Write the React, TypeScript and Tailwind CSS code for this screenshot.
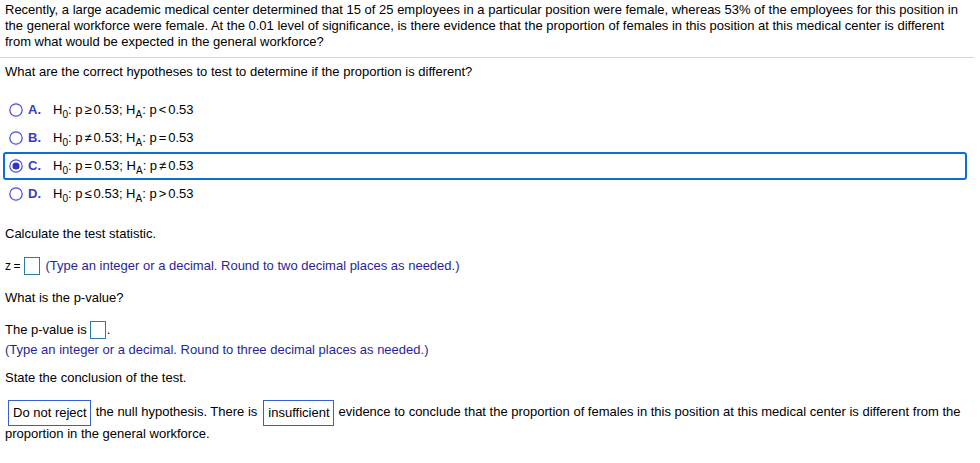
import React from "react";

const font = { fontFamily: '"Liberation Sans", Arial, sans-serif' };

function Radio({ checked }: { checked?: boolean }) {
  return (
    <svg width="14" height="14" viewBox="0 0 14 14" className="shrink-0">
      <circle cx="7" cy="7" r="6.2" fill="white" stroke="#4b4bd6" strokeWidth="1.2" />
      {checked && <circle cx="7" cy="7" r="3.6" fill="#3434c4" />}
    </svg>
  );
}

function Sub({ children }: { children: React.ReactNode }) {
  return <span className="relative top-[4px] text-[10px] leading-none">{children}</span>;
}

function Rel({ op }: { op: string }) {
  return (
    <span>
      p<span className="mx-[2px]">{op}</span>0.53
    </span>
  );
}

const options = [
  { l: "A.", h0: "\u2265", ha: "<" },
  { l: "B.", h0: "\u2260", ha: "=" },
  { l: "C.", h0: "=", ha: "\u2260", sel: true },
  { l: "D.", h0: "\u2264", ha: ">" },
];

export default function App() {
  return (
    <div className="w-[974px] bg-white text-[13px] leading-[16px] text-black" style={font}>
      <div className="px-[5px] pt-[2px] pb-[7px] border-b border-[#d3d6dc]">
        Recently, a large academic medical center determined that 15 of 25 employees in a particular position were female, whereas 53% of the employees for this position in the general workforce were female. At the 0.01 level of significance, is there evidence that the proportion of females in this position at this medical center is different from what would be expected in the general workforce?
      </div>
      <div className="px-[5px]">
        <div className="mt-[6px]">What are the correct hypotheses to test to determine if the proportion is different?</div>
        <div className="mt-[16px] ml-[-2px] mr-[2px] flex flex-col">
          {options.map((o) => (
            <div
              key={o.l}
              className={
                "h-[28px] flex items-center rounded-[3px] border-2 pl-[4px] " +
                (o.sel ? "border-[#0b70cf]" : "border-transparent")
              }
            >
              <Radio checked={o.sel} />
              <span className="ml-[5px] w-[25px] font-bold text-[#3b3bbf]">{o.l}</span>
              <span>
                H<Sub>0</Sub>: <Rel op={o.h0} />; H<Sub>A</Sub>: <Rel op={o.ha} />
              </span>
            </div>
          ))}
        </div>
        <div className="mt-[18px]">Calculate the test statistic.</div>
        <div className="mt-[15px] flex items-center h-[18px]">
          <span className="text-[12px]">z&thinsp;=</span>
          <span className="ml-[4px] w-[16px] h-[18px] border border-[#2a7ca4] bg-white"></span>
          <span className="ml-[5px] text-[#2a1f96]">(Type an integer or a decimal. Round to two decimal places as needed.)</span>
        </div>
        <div className="mt-[15px]">What is the p-value?</div>
        <div className="mt-[15px] flex items-center h-[18px]">
          <span>The p-value is</span>
          <span className="ml-[3px] w-[16px] h-[18px] border border-[#2a7ca4] bg-white"></span>
          <span className="ml-[1px]">.</span>
        </div>
        <div className="mt-[3px] text-[#2a1f96]">(Type an integer or a decimal. Round to three decimal places as needed.)</div>
        <div className="mt-[12px]">State the conclusion of the test.</div>
        <div className="mt-[14px] leading-[16px]">
          <span className="inline-block ml-[3px] mr-[5px] border border-[#3560d4] pl-[4px] pr-[3px] py-[4px] align-middle">Do not reject</span>
          <span>the null hypothesis. There is</span>
          <span className="inline-block ml-[6px] mr-[5px] border border-[#3560d4] pl-[4px] pr-[3px] py-[4px] align-middle">insufficient</span>
          <span>evidence to conclude that the proportion of females in this position at this medical center is different from the proportion in the general workforce.</span>
        </div>
      </div>
    </div>
  );
}
